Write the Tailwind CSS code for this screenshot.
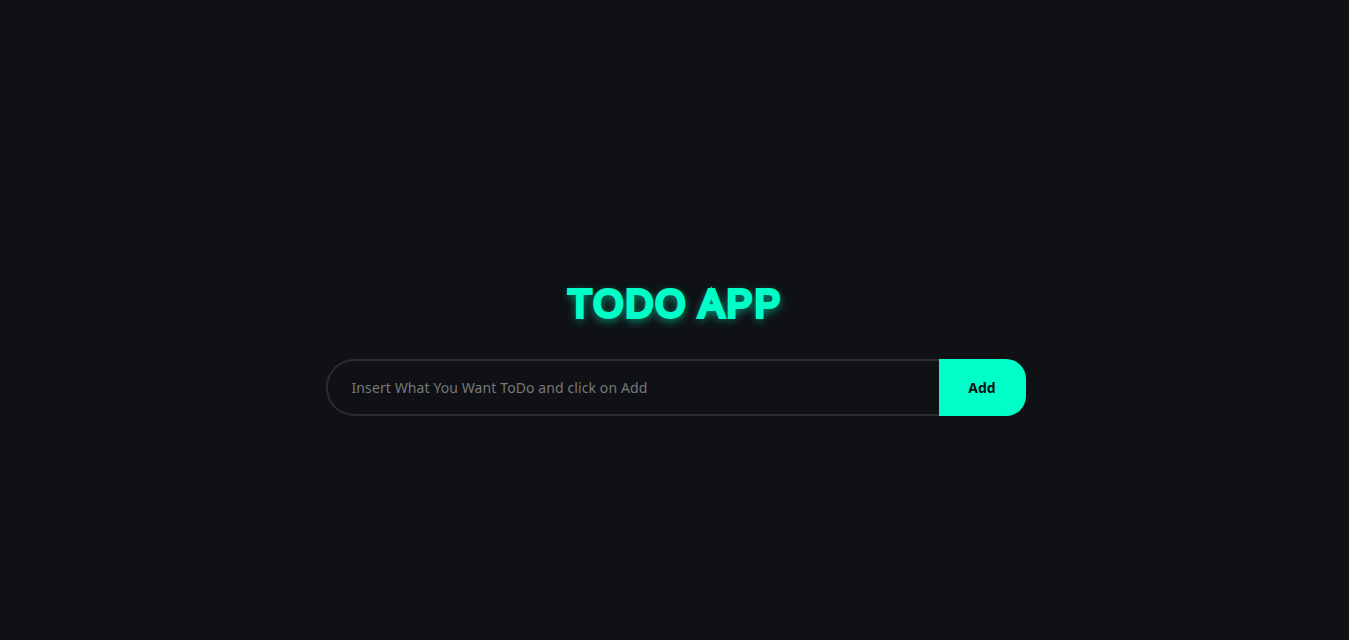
<!DOCTYPE html>
<html lang="en">
<head>
    <meta charset="UTF-8">
    <meta name="viewport" content="width=device-width, initial-scale=1.0">
    <title>Todo App</title>
    <script src="https://cdn.jsdelivr.net/npm/@tailwindcss/browser@4"></script>
</head>
<body class="bg-[#0f1115] font-['Noto_Sans',sans-serif]">
    <div class="h-[640px] flex flex-col items-center pt-[279px]">
        <!-- Title -->
        <h1 class="h-[50px] leading-[50px] ml-[2px] text-[38px] font-normal tracking-[2.6px] text-[#00ffc8] font-['Liberation_Sans',sans-serif] [-webkit-text-stroke:4px_#00ffc8] [text-shadow:0_3px_10px_#00ffc8]">TODO APP</h1>

        <!-- Input row -->
        <form class="flex w-[700px] h-[57px] mt-[30px] ml-[2px]">
            <input type="text" placeholder="Insert What You Want ToDo and click on Add" class="flex-1 min-w-0 bg-transparent border-2 border-r-0 border-[#2a2c30] rounded-l-[28px] pl-[24px] pr-4 text-[14px] tracking-[0.1px] text-white placeholder:text-[#77787b] outline-none">
            <button type="button" class="w-[87px] bg-[#00ffc8] text-[#0f1115] text-[14px] font-bold rounded-r-[20px]">Add</button>
        </form>
    </div>
</body>
</html>
